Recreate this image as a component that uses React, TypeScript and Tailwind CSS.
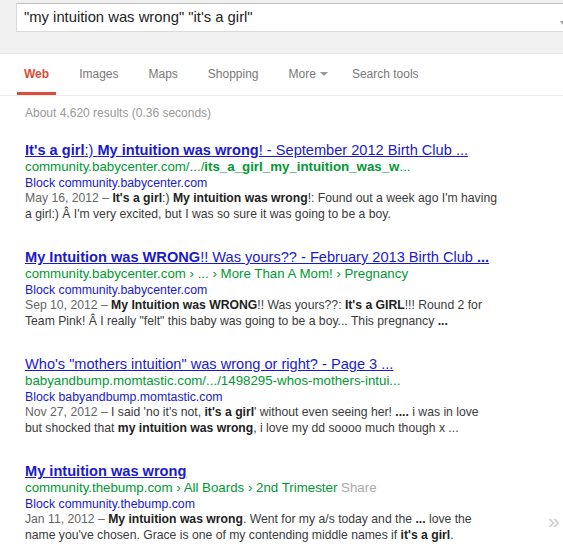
import React from "react";

type Part = { t: string; b?: boolean };

const results: {
  title: Part[];
  url: Part[];
  share?: boolean;
  block: string;
  date: string;
  lines: Part[][];
}[] = [
  {
    title: [
      { t: "It's a girl", b: true },
      { t: ":) " },
      { t: "My intuition was wrong", b: true },
      { t: "! - September 2012 Birth Club ..." },
    ],
    url: [{ t: "community.babycenter.com/.../" }, { t: "its_a_girl_my_intuition_was_w", b: true }, { t: "..." }],
    block: "Block community.babycenter.com",
    date: "May 16, 2012 – ",
    lines: [
      [
        { t: "It's a girl", b: true },
        { t: ":) " },
        { t: "My intuition was wrong", b: true },
        { t: "!: Found out a week ago I'm having" },
      ],
      [{ t: "a girl:) Â I'm very excited, but I was so sure it was going to be a boy." }],
    ],
  },
  {
    title: [
      { t: "My Intuition was WRONG", b: true },
      { t: "!! Was yours?? - February 2013 Birth Club " },
      { t: "...", b: true },
    ],
    url: [{ t: "community.babycenter.com › ... › More Than A Mom! › Pregnancy" }],
    block: "Block community.babycenter.com",
    date: "Sep 10, 2012 – ",
    lines: [
      [
        { t: "My Intuition was WRONG", b: true },
        { t: "!! Was yours??: " },
        { t: "It's a GIRL", b: true },
        { t: "!!! Round 2 for" },
      ],
      [
        { t: 'Team Pink! Â I really "felt" this baby was going to be a boy... This pregnancy ' },
        { t: "...", b: true },
      ],
    ],
  },
  {
    title: [{ t: 'Who\'s "mothers intuition" was wrong or right? - Page 3 ...' }],
    url: [{ t: "babyandbump.momtastic.com/.../1498295-whos-mothers-intui..." }],
    block: "Block babyandbump.momtastic.com",
    date: "Nov 27, 2012 – ",
    lines: [
      [
        { t: "I said 'no it's not, " },
        { t: "it's a girl", b: true },
        { t: "' without even seeing her! " },
        { t: "....", b: true },
        { t: " i was in love" },
      ],
      [
        { t: "but shocked that " },
        { t: "my intuition was wrong", b: true },
        { t: ", i love my dd soooo much though x ..." },
      ],
    ],
  },
  {
    title: [{ t: "My intuition was wrong", b: true }],
    url: [{ t: "community.thebump.com › All Boards › 2nd Trimester" }],
    share: true,
    block: "Block community.thebump.com",
    date: "Jan 11, 2012 – ",
    lines: [
      [
        { t: "My intuition was wrong", b: true },
        { t: ". Went for my a/s today and the " },
        { t: "...", b: true },
        { t: " love the" },
      ],
      [
        { t: "name you've chosen. Grace is one of my contending middle names if " },
        { t: "it's a girl", b: true },
        { t: "." },
      ],
    ],
  },
];

const render = (parts: Part[]) =>
  parts.map((p, i) => (p.b ? <b key={i} className="font-bold text-[#222]">{p.t}</b> : <span key={i}>{p.t}</span>));

const tabs = ["Web", "Images", "Maps", "Shopping", "More", "Search tools"];

export default function App() {
  return (
    <div className="w-[563px] h-[549px] overflow-hidden bg-white font-['Liberation_Sans',Arial,sans-serif]">
      {/* search header */}
      <div className="h-[54px] bg-[#f1f1f1] border-b border-[#e5e5e5] pt-[3px] pl-[16px]">
        <div className="w-[560px] h-[29px] bg-white border border-[#d9d9d9] border-t-[#c0c0c0] flex items-center pl-[7px] relative">
          <span className="text-[14.8px] text-[#222]">"my intuition was wrong" "it's a girl"</span>
          <span className="absolute left-[543px] top-[17px] w-0 h-0 border-l-[3px] border-r-[3px] border-t-[4px] border-l-transparent border-r-transparent border-t-[#999]" />
        </div>
      </div>

      {/* tabs */}
      <div className="h-[42px] border-b border-[#ebebeb] pl-[17px] flex gap-[16px]">
        {tabs.map((t) => (
          <div
            key={t}
            className={`px-[7px] pt-[1px] flex items-center border-b-[3px] text-[12px] ${
              t === "Web" ? "border-[#dd4b39] text-[#dd4b39] font-bold" : "border-transparent text-[#777]"
            } ${t === "Search tools" ? "-ml-[6px]" : ""}`}
          >
            {t}
            {t === "More" && (
              <span className="ml-[4px] mt-[1px] w-0 h-0 border-l-[4px] border-r-[4px] border-t-[4px] border-l-transparent border-r-transparent border-t-[#999]" />
            )}
          </div>
        ))}
      </div>

      <div className="pl-[25px] pt-[10px] text-[12px] leading-[15px] text-[#999]">About 4,620 results (0.36 seconds)</div>

      <div className="pl-[25px] pt-[20px] flex flex-col gap-[26px]">
        {results.map((r, i) => (
          <div key={i} className="relative whitespace-nowrap">
            <div className="text-[14.6px] leading-[18px] text-[#1a1acc] underline [&_b]:text-[#1a1acc]">{render(r.title)}</div>
            <div className="text-[13.3px] leading-[16px] text-[#093] [&_b]:text-[#093]">
              {render(r.url)}
              {r.share && <span className="text-[#aaa]"> Share</span>}
            </div>
            <div className="text-[12.3px] leading-[16px] text-[#1a1acc]">{r.block}</div>
            <div className="text-[12.2px] leading-[15.5px] text-[#3a3a3a]">
              <div>
                <span className="text-[#666]">{r.date}</span>
                {render(r.lines[0])}
              </div>
              <div>{render(r.lines[1])}</div>
            </div>
            {i === 3 && (
              <span className="absolute left-[523px] top-[49px] text-[21px] leading-[20px] text-[#ccc]">»</span>
            )}
          </div>
        ))}
      </div>
    </div>
  );
}
